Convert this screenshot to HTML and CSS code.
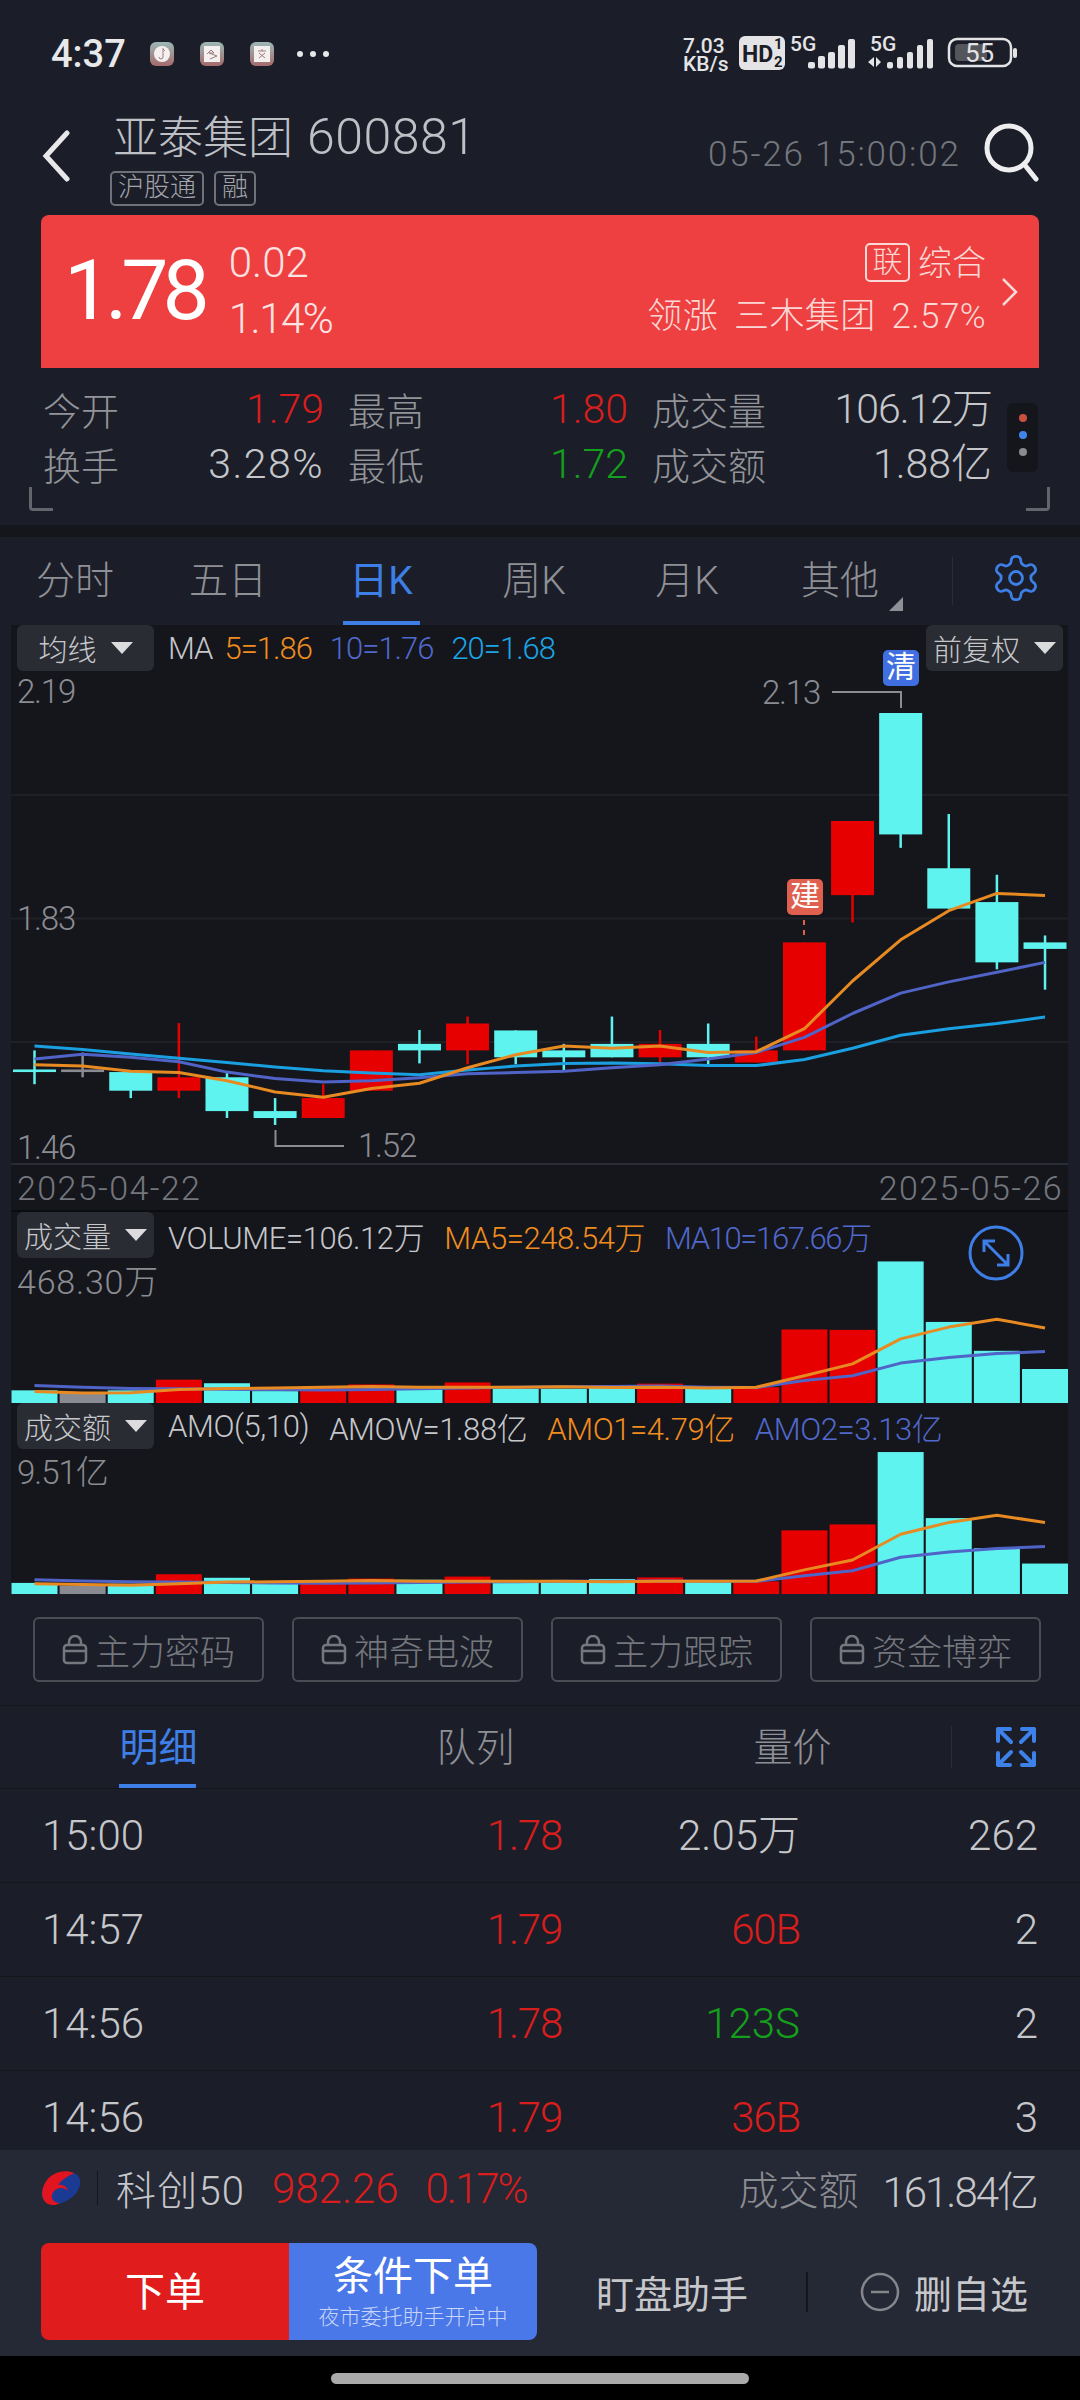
FILE: index.html
```html
<!DOCTYPE html>
<html lang="zh-CN">
<head>
  <meta charset="UTF-8" />
  <meta name="viewport" content="width=device-width, initial-scale=1.0"/>
  <title>亚泰集团 600881</title>
  <link rel="stylesheet" href="styles.css">
</head>
<body>

<!-- Status bar -->
<div class="status">
  <span class="clock">4:37</span>
  <span class="app-ic"><svg width="16" height="16" viewBox="0 0 16 16"><circle class="ic-paper" cx="8" cy="8" r="8"/><path class="ic-mark" d="M9 2v9a2 2 0 0 1-4 0M9 3l2 2"/></svg></span>
  <span class="app-ic"><svg width="16" height="16" viewBox="0 0 16 16"><rect class="ic-paper" width="16" height="16"/><path class="ic-mark" d="M3 8l4-4 3 3H5l8 3-7 3"/></svg></span>
  <span class="app-ic"><svg width="16" height="16" viewBox="0 0 16 16"><rect class="ic-paper" width="16" height="16"/><path class="ic-mark" d="M4 5h8M8 3v2M5 7l6 5M11 7l-6 5"/></svg></span>
  <span class="more"><i></i><i></i><i></i></span>
  <svg class="status-right" viewBox="680 30 340 50" width="340" height="50">
    <text class="sb-small" x="683" y="54">7.03</text>
    <text class="sb-small" x="683" y="72">KB/s</text>
    <rect class="sb-fill" x="739" y="37" width="46" height="34" rx="6"/>
    <text class="sb-hd" x="742" y="63">HD</text>
    <text class="sb-hd-n" x="774" y="50">1</text>
    <text class="sb-hd-n" x="774" y="68">2</text>
    <text class="sb-small" x="790" y="52">5G</text>
    <rect class="sb-fill" x="808" y="63" width="7" height="6.5" rx="2"/>
    <rect class="sb-fill" x="818" y="57" width="7" height="12.5" rx="2"/>
    <rect class="sb-fill" x="828" y="53" width="7" height="16.5" rx="2"/>
    <rect class="sb-fill" x="838" y="46" width="7" height="23.5" rx="2"/>
    <rect class="sb-fill" x="848" y="40" width="7" height="29.5" rx="2"/>
    <text class="sb-small" x="870" y="52">5G</text>
    <path class="sb-fill" d="M868 63l6-5v10zM876 58l5 5-5 5z"/>
    <rect class="sb-fill" x="887" y="63" width="6" height="6.5" rx="2"/>
    <rect class="sb-fill" x="897" y="58" width="6" height="11.5" rx="2"/>
    <rect class="sb-fill" x="907" y="53" width="6" height="16.5" rx="2"/>
    <rect class="sb-fill" x="917" y="46" width="6" height="23.5" rx="2"/>
    <rect class="sb-fill" x="927" y="40" width="6" height="29.5" rx="2"/>
    <rect class="sb-batt" x="949" y="40" width="62" height="27" rx="8"/>
    <rect class="sb-level" x="955" y="45" width="32" height="17" rx="4"/>
    <text class="sb-pct" x="965" y="63">55</text>
    <rect class="sb-fill" x="1013" y="49" width="4" height="10" rx="2"/>
  </svg>
</div>

<!-- Title bar -->
<div class="titlebar">
  <svg class="back" width="30" height="52" viewBox="0 0 30 52"><path d="M26 3L5 26l21 23"/></svg>
  <div class="title-main">
    <div class="stock-name">亚泰集团<span class="stock-code">600881</span></div>
    <div class="tags"><span class="tag">沪股通</span><span class="tag">融</span></div>
  </div>
  <div class="updated">05-26 15:00:02</div>
  <svg class="search" width="56" height="60" viewBox="0 0 56 60"><circle cx="26" cy="25" r="22"/><path d="M41 41l12 15"/></svg>
</div>

<!-- Quote card -->
<div class="quote">
  <div class="last">1.78</div>
  <div class="change"><div>0.02</div><div class="change-pct">1.14%</div></div>
  <div class="sector">
    <div class="sector-top"><span class="link-box">联</span>综合</div>
    <div class="sector-lead">领涨 三木集团 2.57%</div>
  </div>
  <svg class="quote-arrow" width="18" height="30" viewBox="0 0 18 30"><path d="M2 2l13 13L2 28"/></svg>
</div>

<!-- Day stats -->
<div class="stats">
  <div class="stats-grid">
    <div class="pair"><span>今开</span><b class="up">1.79</b></div>
    <div class="pair"><span>最高</span><b class="up">1.80</b></div>
    <div class="pair"><span>成交量</span><b class="tight">106.12万</b></div>
    <div class="pair"><span>换手</span><b class="wide">3.28%</b></div>
    <div class="pair"><span>最低</span><b class="down">1.72</b></div>
    <div class="pair"><span>成交额</span><b>1.88亿</b></div>
  </div>
  <div class="pager"><i class="p-red"></i><i class="p-blue"></i><i class="p-gray"></i></div>
  <span class="corner corner-l"></span>
  <span class="corner corner-r"></span>
</div>
<div class="strip"></div>

<!-- Period tabs -->
<div class="tabs">
  <div class="tab p">分时</div>
  <div class="tab p">五日</div>
  <div class="tab p on">日K</div>
  <div class="tab p">周K</div>
  <div class="tab p">月K</div>
  <div class="tab p more-tab">其他</div>
  <div class="tab-icon">
    <svg class="gear" width="52" height="52" viewBox="0 0 24 24"><path d="M12.22 2h-.44a2 2 0 0 0-2 2v.18a2 2 0 0 1-1 1.73l-.43.25a2 2 0 0 1-2 0l-.15-.08a2 2 0 0 0-2.73.73l-.22.38a2 2 0 0 0 .73 2.73l.15.1a2 2 0 0 1 1 1.72v.51a2 2 0 0 1-1 1.74l-.15.09a2 2 0 0 0-.73 2.73l.22.38a2 2 0 0 0 2.73.73l.15-.08a2 2 0 0 1 2 0l.43.25a2 2 0 0 1 1 1.73V20a2 2 0 0 0 2 2h.44a2 2 0 0 0 2-2v-.18a2 2 0 0 1 1-1.73l.43-.25a2 2 0 0 1 2 0l.15.08a2 2 0 0 0 2.73-.73l.22-.39a2 2 0 0 0-.73-2.73l-.15-.08a2 2 0 0 1-1-1.74v-.5a2 2 0 0 1 1-1.74l.15-.09a2 2 0 0 0 .73-2.73l-.22-.38a2 2 0 0 0-2.73-.73l-.15.08a2 2 0 0 1-2 0l-.43-.25a2 2 0 0 1-1-1.73V4a2 2 0 0 0-2-2z"/><circle cx="12" cy="12" r="3"/></svg>
  </div>
</div>

<!-- Charts -->
<div class="charts">
  <div class="k-area">
    <svg id="kChart" class="plot" width="1057" height="540"></svg>
    <div class="legend legend-k">
      <div class="drop">均线</div>
      <span class="lg-white lg-ma">MA</span>
      <span class="lg-orange">5=1.86</span>
      <span class="lg-purple">10=1.76</span>
      <span class="lg-blue">20=1.68</span>
      <div class="drop drop-right">前复权</div>
    </div>
    <span class="axis a-top">2.19</span>
    <span class="axis a-mid">1.83</span>
    <span class="axis a-low">1.46</span>
    <span class="axis a-high-mark">2.13</span>
    <span class="axis a-low-mark">1.52</span>
    <span class="badge b-sell">清</span>
    <span class="badge b-buy">建</span>
  </div>
  <div class="dates"><span>2025-04-22</span><span>2025-05-26</span></div>

  <div class="sub-area">
    <svg id="volChart" class="plot" width="1057" height="191"></svg>
    <div class="legend">
      <div class="drop">成交量</div>
      <span class="lg-white">VOLUME=106.12万</span>
      <span class="lg-orange">MA5=248.54万</span>
      <span class="lg-purple lg-tight">MA10=167.66万</span>
    </div>
    <span class="axis a-sub a-vol">468.30万</span>
    <svg class="zoom-ic" width="56" height="56" viewBox="0 0 56 56"><circle cx="28" cy="28" r="26"/><path d="M16 16l24 24M16 27V16h11M40 29v11H29"/></svg>
  </div>

  <div class="sub-area">
    <svg id="amoChart" class="plot" width="1057" height="191"></svg>
    <div class="legend">
      <div class="drop">成交额</div>
      <span class="lg-white">AMO(5,10)</span>
      <span class="lg-white">AMOW=1.88亿</span>
      <span class="lg-orange">AMO1=4.79亿</span>
      <span class="lg-purple">AMO2=3.13亿</span>
    </div>
    <span class="axis a-sub">9.51亿</span>
  </div>
</div>

<!-- Locked indicators -->
<div class="locks">
  <div class="lock-btn"><svg width="26" height="30" viewBox="0 0 26 30"><rect x="2" y="10" width="22" height="18" rx="3"/><path d="M7 10V7a6 6 0 0 1 12 0v3M2 16h22"/></svg>主力密码</div>
  <div class="lock-btn"><svg width="26" height="30" viewBox="0 0 26 30"><rect x="2" y="10" width="22" height="18" rx="3"/><path d="M7 10V7a6 6 0 0 1 12 0v3M2 16h22"/></svg>神奇电波</div>
  <div class="lock-btn"><svg width="26" height="30" viewBox="0 0 26 30"><rect x="2" y="10" width="22" height="18" rx="3"/><path d="M7 10V7a6 6 0 0 1 12 0v3M2 16h22"/></svg>主力跟踪</div>
  <div class="lock-btn"><svg width="26" height="30" viewBox="0 0 26 30"><rect x="2" y="10" width="22" height="18" rx="3"/><path d="M7 10V7a6 6 0 0 1 12 0v3M2 16h22"/></svg>资金博弈</div>
</div>

<!-- Trade tabs -->
<div class="tabs tabs-trade">
  <div class="tab t on">明细</div>
  <div class="tab t">队列</div>
  <div class="tab t">量价</div>
  <div class="tab-icon">
    <svg class="expand" width="40" height="40" viewBox="0 0 40 40"><path d="M14 2H2v12M2 2l13 13M26 2h12v12M38 2L25 15M14 38H2V26M2 38l13-13M26 38h12V26M38 38L25 25"/></svg>
  </div>
</div>

<!-- Trade rows -->
<div class="trades">
  <div class="trade"><span>15:00</span><span class="up">1.78</span><span>2.05万</span><span>262</span></div>
  <div class="trade"><span>14:57</span><span class="up">1.79</span><span class="up">60B</span><span>2</span></div>
  <div class="trade"><span>14:56</span><span class="up">1.78</span><span class="down">123S</span><span>2</span></div>
  <div class="trade"><span>14:56</span><span class="up">1.79</span><span class="up">36B</span><span>3</span></div>
</div>

<!-- Bottom bar -->
<div class="bottom">
  <div class="index-row">
    <svg class="index-logo" width="40" height="36" viewBox="0 0 40 36">
      <ellipse class="logo-blue" cx="20" cy="18" rx="21" ry="14" transform="rotate(-32 20 18)"/>
      <path class="logo-red" d="M33 3C24-1 10 2 4 13c-5 9-3 18 3 21 4 2 9 1 12-1-5 0-9-3-8-8 1-4 5-7 9-7 4 0 6 2 7 3-1-5-6-7-10-6 4-6 11-9 16-12z"/>
    </svg>
    <span class="index-sep"></span>
    <span class="index-name">科创50</span>
    <span class="index-val up">982.26</span>
    <span class="index-val up pct">0.17%</span>
    <span class="index-amt-label">成交额</span>
    <span class="index-amt">161.84亿</span>
  </div>
  <div class="action-row">
    <div class="order-btn">下单</div>
    <div class="cond-btn"><div class="cond-main">条件下单</div><div class="cond-sub">夜市委托助手开启中</div></div>
    <div class="action-link watch">盯盘助手</div>
    <span class="action-sep"></span>
    <svg class="minus-ic" width="40" height="40" viewBox="0 0 40 40"><circle cx="20" cy="20" r="18"/><path d="M11 20h18"/></svg>
    <div class="action-link">删自选</div>
  </div>
</div>

<div class="navbar"><span class="home-pill"></span></div>

<script src="chart.js"></script>
</body>
</html>
```

FILE: styles.css
```css
* {
  box-sizing: border-box;
}

body {
  margin: 0;
  width: 1080px;
  height: 2400px;
  overflow: hidden;
  background: #1b1e28;
  color: #c6c7cb;
  font-family: Roboto, "Noto Sans CJK SC", sans-serif;
  font-weight: 300;
}

.up { color: #d81d1d; }
.down { color: #14a01c; }

/* Status bar */
.status {
  height: 100px;
  padding: 8px 0 0 51px;
  display: flex;
  align-items: center;
}

.clock {
  font-size: 38px;
  font-weight: 500;
  color: #e8e8ea;
  width: 99px;
}

.app-ic {
  width: 24px;
  height: 24px;
  margin-right: 26px;
  border-radius: 6px;
  background: linear-gradient(#9db9b6, #a56a6c);
  display: flex;
  align-items: center;
  justify-content: center;
}

.ic-paper { fill: #f4f0f0; }
.ic-mark { fill: none; stroke: #a07a7c; stroke-width: 1; }

.more {
  display: flex;
  gap: 7px;
  margin-left: -3px;
}

.more i {
  width: 6px;
  height: 6px;
  border-radius: 50%;
  background: #e8e8ea;
}

.status-right {
  margin-left: auto;
  margin-right: 60px;
}

.sb-small { font: 500 21px Roboto, sans-serif; fill: #e4e4e6; }
.sb-fill { fill: #e4e4e6; }
.sb-hd { font: 700 23px Roboto, sans-serif; fill: #1b1e28; }
.sb-hd-n { font: 700 15px Roboto, sans-serif; fill: #1b1e28; }
.sb-batt { fill: none; stroke: #e4e4e6; stroke-width: 2.5; }
.sb-level { fill: #55565c; }
.sb-pct { font: 400 26px Roboto, sans-serif; fill: #e4e4e6; }

/* Title bar */
.titlebar {
  height: 115px;
  padding-left: 41px;
  display: flex;
  position: relative;
}

.back {
  margin-top: 30px;
  fill: none;
  stroke: #e8e8ea;
  stroke-width: 5;
  stroke-linecap: round;
}

.title-main {
  margin-left: 42px;
}

.stock-name {
  font-size: 45px;
  line-height: 58px;
  margin-top: 8px;
  color: #bfc0c5;
}

.stock-code {
  font-size: 50px;
  letter-spacing: .5px;
  margin-left: 14px;
}

.tags {
  display: flex;
  gap: 10px;
  margin-top: 3px;
  margin-left: -3px;
}

.tag {
  height: 35px;
  padding: 0 6px;
  border: 2px solid #6f7178;
  border-radius: 5px;
  font-size: 26px;
  line-height: 29px;
  color: #a4a5aa;
}

.updated {
  position: absolute;
  left: 708px;
  top: 33px;
  font-size: 35px;
  letter-spacing: 1.8px;
  line-height: 44px;
  color: #74767d;
}

.search {
  position: absolute;
  left: 983px;
  top: 23px;
  fill: none;
  stroke: #eeeef0;
  stroke-width: 5;
  stroke-linecap: round;
}

/* Quote card */
.quote {
  height: 153px;
  margin: 0 41px;
  padding-left: 23px;
  background: #ee4040;
  border-radius: 8px 8px 0 0;
  color: #fff;
  display: flex;
  align-items: center;
  position: relative;
}

.last {
  font-size: 84px;
  font-weight: 400;
  letter-spacing: -6px;
  line-height: 100px;
  margin-top: -2px;
}

.change {
  margin-left: 25px;
  margin-top: -2px;
  font-size: 42px;
  line-height: 56px;
  color: #fbe3e2;
}

.change-pct {
  letter-spacing: -1.5px;
}

.sector {
  margin-left: auto;
  margin-right: 53px;
  margin-top: -4px;
  text-align: right;
  font-size: 34px;
  line-height: 48px;
  color: #f9d8d6;
}

.sector-top {
  display: flex;
  justify-content: flex-end;
  align-items: center;
  margin-bottom: 6px;
}

.sector-lead {
  font-size: 35px;
  word-spacing: 7px;
  letter-spacing: .4px;
}

.link-box {
  width: 45px;
  height: 39px;
  border: 2px solid #f9d8d6;
  border-radius: 5px;
  margin-right: 8px;
  font-size: 30px;
  line-height: 34px;
  text-align: center;
}

.quote-arrow {
  position: absolute;
  right: 20px;
  top: 62px;
  fill: none;
  stroke: #f9d8d6;
  stroke-width: 2.5;
}

/* Day stats */
.stats {
  height: 157px;
  padding: 13px 0 0 43px;
  position: relative;
}

.stats-grid {
  display: grid;
  grid-template-columns: 281px 280px 340px;
  column-gap: 24px;
}

.pair {
  height: 55px;
  display: flex;
  justify-content: space-between;
  align-items: center;
  font-size: 38px;
  color: #939499;
}

.pair b {
  font-weight: 300;
  font-size: 41px;
  line-height: 48px;
  color: #c6c7cb;
}

.pair b.up { color: #d81d1d; }
.pair b.down { color: #14a01c; }
.pair b.tight { letter-spacing: -1px; }
.pair b.wide { letter-spacing: 1.5px; }

.pager {
  position: absolute;
  left: 1007px;
  top: 35px;
  width: 31px;
  height: 69px;
  padding-top: 11px;
  background: #14161c;
  border-radius: 6px;
  display: flex;
  flex-direction: column;
  align-items: center;
  gap: 9px;
}

.pager i {
  width: 8px;
  height: 8px;
  border-radius: 50%;
}

.p-red { background: #c9503f; }
.p-blue { background: #3f86e8; }
.p-gray { background: #8a8b90; }

.corner {
  position: absolute;
  top: 119px;
  width: 24px;
  height: 24px;
  border-bottom: 3px solid #63656c;
}

.corner-l {
  left: 29px;
  border-left: 3px solid #63656c;
  border-bottom-left-radius: 4px;
}

.corner-r {
  left: 1026px;
  border-right: 3px solid #63656c;
  border-bottom-right-radius: 4px;
}

.strip {
  height: 12px;
  background: #14161c;
}

/* Tabs */
.tabs {
  height: 88px;
  display: flex;
}

.tab {
  height: 100%;
  display: flex;
  justify-content: center;
  align-items: center;
  font-size: 39px;
  color: #8f9096;
  position: relative;
}

.tab.p { width: 153px; padding: 0 3px 8px 0; }

.tab.on {
  color: #3d7fe6;
  font-weight: 400;
}

.tab.on::after {
  content: '';
  position: absolute;
  bottom: 0;
  left: 37px;
  width: 77px;
  height: 4px;
  background: #3d7fe6;
}

.more-tab::after {
  content: '';
  position: absolute;
  left: 124px;
  top: 60px;
  border-style: solid;
  border-width: 0 0 14px 14px;
  border-color: transparent transparent #8f9096 transparent;
}

.tab-icon {
  flex: 1;
  position: relative;
  display: flex;
  justify-content: center;
  align-items: center;
  margin-left: 34px;
}

.tab-icon::before {
  content: '';
  position: absolute;
  left: 0;
  top: 20px;
  bottom: 20px;
  width: 1px;
  background: #2a2d38;
}

.gear {
  fill: none;
  stroke: #3d7fe6;
  stroke-width: 1.3;
  margin-bottom: 6px;
}

/* Charts */
.charts {
  margin: 0 12px 0 11px;
  height: 969px;
  background: #14161c;
}

.k-area {
  height: 540px;
  position: relative;
  border-bottom: 2px solid #2a2c33;
}

.sub-area {
  height: 191px;
  position: relative;
}

.plot {
  position: absolute;
  left: 0;
  top: 0;
}

.legend {
  position: relative;
  height: 46px;
  padding: 0 5px 0 6px;
  display: flex;
  align-items: center;
  gap: 20px;
  font-size: 31px;
  letter-spacing: -.4px;
  white-space: nowrap;
}

.legend-k {
  gap: 18px;
  letter-spacing: -1px;
}

.lg-white { color: #c6c7cb; }
.lg-orange { color: #f08c1e; }
.lg-purple { color: #5168cc; }
.lg-blue { color: #1ca4e4; }
.lg-ma { margin-right: -6px; }
.lg-tight { letter-spacing: -1.4px; }

.drop {
  width: 137px;
  height: 46px;
  margin-right: -6px;
  background: #2a2c33;
  border-radius: 6px;
  display: flex;
  align-items: center;
  justify-content: center;
  gap: 14px;
  font-size: 29px;
  letter-spacing: 0;
  color: #c6c7cb;
}

.legend-k .drop {
  margin-right: -4px;
}

.drop::after {
  content: '';
  border-style: solid;
  border-width: 12px 11px 0 11px;
  border-color: #dcdcde transparent transparent transparent;
}

.legend-k .drop-right {
  margin: 0 0 0 auto;
}

.axis {
  position: absolute;
  font-size: 33px;
  letter-spacing: -1.2px;
  line-height: 36px;
  color: #8b8c92;
}

.a-top { left: 6px; top: 49px; }
.a-mid { left: 6px; top: 276px; }
.a-low { left: 6px; top: 505px; }
.a-high-mark { left: 751px; top: 50px; }
.a-low-mark { left: 347px; top: 503px; }
.a-sub { left: 6px; top: 52px; letter-spacing: -1px; }
.a-vol { letter-spacing: .8px; font-size: 34px; }

.badge {
  position: absolute;
  width: 36px;
  height: 36px;
  border-radius: 5px;
  font-size: 30px;
  line-height: 34px;
  text-align: center;
  color: #fff;
  font-weight: 400;
}

.b-sell { left: 872px; top: 25px; background: #3f6fe0; }
.b-buy { left: 776px; top: 254px; background: #e0604f; }

.dates {
  height: 47px;
  padding: 0 5px 0 6px;
  display: flex;
  justify-content: space-between;
  align-items: center;
  font-size: 34px;
  letter-spacing: 1.4px;
  color: #74767d;
  border-bottom: 2px solid #0c0d11;
}

.zoom-ic {
  position: absolute;
  left: 957px;
  top: 13px;
  fill: none;
  stroke: #3d7fe6;
  stroke-width: 3;
}

/* Locks */
.locks {
  height: 111px;
  padding: 23px 39px 0 33px;
  display: flex;
  gap: 28px;
}

.lock-btn {
  width: 231px;
  height: 65px;
  border: 2px solid #4b4d55;
  border-radius: 6px;
  display: flex;
  align-items: center;
  justify-content: center;
  gap: 7px;
  font-size: 35px;
  color: #75777e;
}

.lock-btn svg {
  fill: none;
  stroke: #75777e;
  stroke-width: 2.5;
}

/* Trade tabs */
.tabs-trade {
  height: 84px;
  border-top: 1px solid #14161c;
  border-bottom: 1px solid #14161c;
}

.tab.t { width: 317px; padding-bottom: 6px; }
.tab.t.on::after { left: 119px; }
.tabs-trade .tab-icon { margin-left: 0; }

.expand {
  fill: none;
  stroke: #3d82ea;
  stroke-width: 4;
  stroke-linecap: round;
  stroke-linejoin: round;
}

/* Trades */
.trades {
  height: 361px;
  overflow: hidden;
}

.trade {
  height: 94px;
  padding-left: 42px;
  display: grid;
  grid-template-columns: 320px 200px 238px 238px;
  align-items: center;
  border-bottom: 1px solid #14161c;
  font-size: 42px;
  line-height: 50px;
}

.trade span {
  text-align: right;
}

.trade span:first-child {
  text-align: left;
}

.trade span.up {
  letter-spacing: -1.2px;
}

/* Bottom bar */
.bottom {
  height: 206px;
  background: #252835;
  padding: 0 43px 0 41px;
}

.index-row {
  height: 76px;
  display: flex;
  align-items: center;
  font-size: 42px;
}

.logo-blue { fill: #1a3a94; }
.logo-red { fill: #e2141f; }

.index-sep {
  width: 1px;
  height: 34px;
  margin: 0 18px 0 16px;
  background: #14161c;
}

.index-name {
  width: 156px;
  font-size: 40px;
  letter-spacing: 1.2px;
}

.index-val {
  margin-right: 27px;
}

.index-val.pct {
  letter-spacing: -2px;
}

.index-amt-label {
  margin-left: auto;
  font-size: 40px;
  color: #8b8c92;
  margin-right: 24px;
}

.index-amt {
  letter-spacing: -2px;
}

.action-row {
  height: 97px;
  margin-top: 17px;
  display: flex;
  align-items: center;
}

.order-btn {
  width: 248px;
  height: 100%;
  background: #e01c1c;
  border-radius: 8px 0 0 8px;
  padding-bottom: 5px;
  color: #fff;
  font-size: 40px;
  font-weight: 400;
  display: flex;
  align-items: center;
  justify-content: center;
}

.cond-btn {
  width: 248px;
  height: 100%;
  background: #4a78e8;
  border-radius: 0 8px 8px 0;
  text-align: center;
  color: #fff;
}

.cond-main {
  font-size: 40px;
  font-weight: 400;
  line-height: 50px;
  margin-top: 9px;
}

.cond-sub {
  font-size: 21px;
  line-height: 30px;
  color: #c9d6f8;
}

.action-link {
  font-size: 38px;
  color: #c6c7cb;
  font-weight: 400;
}

.watch {
  margin-left: 59px;
}

.action-sep {
  width: 2px;
  height: 40px;
  margin: 0 52px 0 58px;
  background: #14161c;
}

.minus-ic {
  fill: none;
  stroke: #85868c;
  stroke-width: 2.5;
  margin-right: 14px;
}

.navbar {
  height: 44px;
  background: #000;
  display: flex;
  justify-content: center;
  padding-top: 17px;
}

.home-pill {
  width: 418px;
  height: 11px;
  border-radius: 6px;
  background: #aaa;
}
```

FILE: chart.js
```js
// Candle values were read in a scaled reference, so they get mapped back here
const CYAN = '#5ff3ef', RED = '#e60000', GRAY = '#8a8a92';
const ORANGE = '#e88a22', PURPLE = '#5063c6', BLUE = '#1a9fe0';
const NS = 'http://www.w3.org/2000/svg';

function add(svg, tag, attrs) {
  const el = document.createElementNS(NS, tag);
  for (const k in attrs) el.setAttribute(k, attrs[k]);
  svg.appendChild(el);
}

const cx = i => 23.5 + 48.12 * i;
const kY = z => z / 2.306 - 95;
const subY = (z, base) => 191 - (base - z) / 2.529;

function line(svg, pts, color, w) {
  add(svg, 'polyline', {
    points: pts.map(p => p[0] + ',' + p[1].toFixed(1)).join(' '),
    fill: 'none', stroke: color, 'stroke-width': w, 'stroke-linejoin': 'round'
  });
}

// color, high, open/top, close/bottom, low
const candles = [
  [CYAN, 1200, 1244, 1250, 1278],
  [GRAY, 1205, 1244, 1250, 1262],
  [CYAN, 1250, 1250, 1293, 1310],
  [RED, 1137, 1262, 1293, 1310],
  [CYAN, 1250, 1262, 1340, 1356],
  [CYAN, 1310, 1340, 1356, 1372],
  [RED, 1278, 1310, 1356, 1356],
  [RED, 1200, 1200, 1293, 1293],
  [CYAN, 1153, 1185, 1200, 1230],
  [RED, 1122, 1138, 1200, 1232],
  [CYAN, 1154, 1154, 1216, 1232],
  [CYAN, 1185, 1200, 1216, 1247],
  [CYAN, 1122, 1185, 1216, 1216],
  [RED, 1153, 1185, 1216, 1228],
  [CYAN, 1138, 1185, 1216, 1232],
  [RED, 1168, 1200, 1228, 1228],
  [RED, 951, 951, 1200, 1200],
  [RED, 671, 671, 842, 905],
  [CYAN, 422, 422, 702, 733],
  [CYAN, 655, 780, 873, 873],
  [CYAN, 795, 858, 997, 1013],
  [CYAN, 935, 951, 966, 1060]
];

const kMa5 = [1233, 1236, 1248, 1251, 1270, 1296, 1308, 1288, 1276, 1240, 1210, 1190, 1195, 1190, 1205, 1203, 1150, 1040, 945, 878, 838, 843];
const kMa10 = [1220, 1209, 1216, 1226, 1250, 1265, 1273, 1270, 1263, 1254, 1251, 1248, 1240, 1233, 1220, 1205, 1170, 1115, 1068, 1042, 1020, 997];
const kMa20 = [1190, 1198, 1208, 1218, 1228, 1238, 1247, 1252, 1256, 1245, 1236, 1230, 1229, 1231, 1235, 1235, 1221, 1195, 1165, 1150, 1138, 1123];

const k = document.getElementById('kChart');
[795, 918.5, 1042].forEach(y => {
  add(k, 'line', { x1: 0, x2: 1057, y1: y - 625, y2: y - 625, stroke: '#1f2127', 'stroke-width': 2 });
});
candles.forEach((c, i) => {
  add(k, 'line', { x1: cx(i), x2: cx(i), y1: kY(c[1]), y2: kY(c[4]), stroke: c[0], 'stroke-width': 2.5 });
  add(k, 'rect', { x: cx(i) - 21.5, y: kY(c[2]), width: 43, height: kY(c[3]) - kY(c[2]), fill: c[0] });
});
line(k, kMa20.map((z, i) => [cx(i), kY(z)]), BLUE, 3);
line(k, kMa10.map((z, i) => [cx(i), kY(z)]), PURPLE, 3);
line(k, kMa5.map((z, i) => [cx(i), kY(z)]), ORANGE, 3);

// high and low markers
add(k, 'path', { d: 'M821 67H890V83', fill: 'none', stroke: '#8b8c92', 'stroke-width': 2 });
add(k, 'path', { d: 'M264.5 505V521H333', fill: 'none', stroke: '#8b8c92', 'stroke-width': 2 });
add(k, 'line', { x1: 793, x2: 793, y1: 295, y2: 313, stroke: '#e0604f', 'stroke-width': 2, 'stroke-dasharray': '5 5' });

function subChart(id, base, tops, ma5, ma10) {
  const svg = document.getElementById(id);
  const kinds = [CYAN, GRAY, CYAN, RED, CYAN, CYAN, RED, RED, CYAN, RED, CYAN, CYAN, CYAN, RED, CYAN, RED, RED, RED, CYAN, CYAN, CYAN, CYAN];
  tops.forEach((z, i) => {
    const y = subY(z, base);
    add(svg, 'rect', { x: cx(i) - 23, y: y, width: 46, height: 191 - y, fill: kinds[i] });
  });
  line(svg, ma10.map((z, i) => [cx(i), subY(z, base)]), PURPLE, 3);
  line(svg, ma5.map((z, i) => [cx(i), subY(z, base)]), ORANGE, 3);
}

subChart('volChart', 512,
  [480, 485, 480, 453, 462, 482, 472, 465, 470, 460, 476, 476, 474, 463, 476, 472, 326, 327, 154, 307, 380, 426],
  [483, 487, 486, 478, 475, 474, 472, 470, 472, 472, 472, 471, 473, 472, 474, 472, 443, 413, 350, 320, 300, 322],
  [468, 472, 475, 476, 477, 478, 479, 478, 476, 474, 472, 471, 470, 469, 472, 473, 455, 443, 411, 397, 387, 382]);

subChart('amoChart', 996,
  [968, 975, 970, 946, 955, 968, 962, 957, 960, 952, 962, 962, 958, 954, 962, 964, 835, 820, 637, 804, 880, 919],
  [970, 972, 974, 970, 966, 965, 964, 962, 964, 964, 964, 964, 965, 964, 964, 963, 935, 910, 845, 815, 797, 815],
  [960, 963, 965, 966, 967, 968, 969, 968, 967, 966, 965, 964, 964, 963, 964, 964, 950, 937, 903, 890, 881, 876]);
```
